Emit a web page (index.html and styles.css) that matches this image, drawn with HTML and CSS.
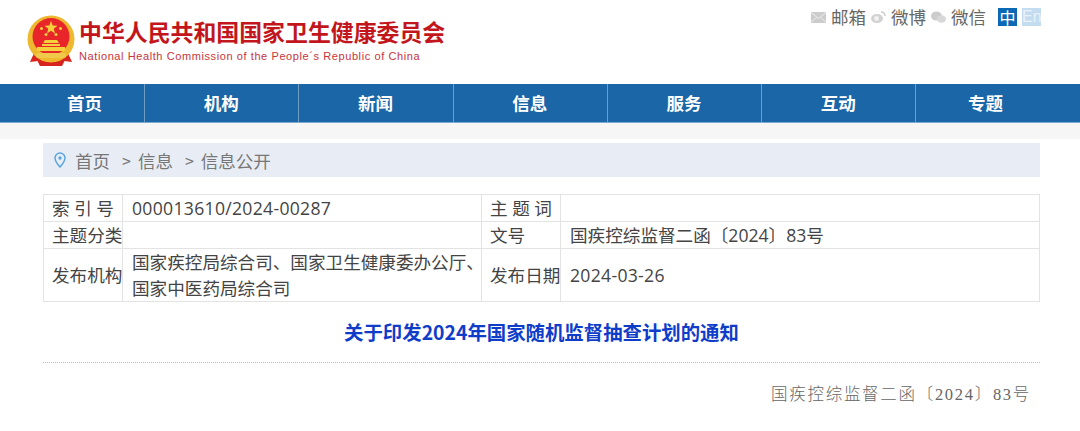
FILE: index.html
```html
<!DOCTYPE html>
<html lang="zh">
<head>
<meta charset="utf-8">
<title>关于印发2024年国家随机监督抽查计划的通知</title>
<link rel="stylesheet" href="styles.css">
</head>
<body>
<header class="top">
  <div class="brand">
    <svg class="emblem" width="48" height="52" viewBox="0 0 48 52">
      <path d="M8 36 L3 47 L11 46 L14 51 L34 51 L37 46 L45 47 L40 36 Z" fill="#d8241f"/>
      <circle cx="24" cy="24" r="23.500" fill="#eeb92f"/>
      <circle cx="24" cy="21.500" r="18.500" fill="#e8262a"/>
      <path d="M24 6l1.700 4.600 4.800.1-3.800 3 1.400 4.700-4.100-2.700-4.100 2.700 1.400-4.700-3.800-3 4.800-.1z" fill="#f6cf3c"/>
      <circle cx="14.500" cy="13.500" r="1.500" fill="#f6cf3c"/><circle cx="33.500" cy="13.500" r="1.500" fill="#f6cf3c"/>
      <circle cx="19" cy="19.500" r="1.500" fill="#f6cf3c"/><circle cx="29" cy="19.500" r="1.500" fill="#f6cf3c"/>
      <path d="M18 25h12l1.500 2v1h-15v-1z M15 29h18v2H15z M10 32h28v4H10z" fill="#f6cf3c"/>
      <rect x="9" y="38" width="30" height="5" rx="2.500" fill="#f1c94a"/>
      <path d="M10 45q14 6 28 0l-3 6H13z" fill="#d8241f"/>
    </svg>
    <div class="brand-text">
      <div class="brand-cn">中华人民共和国国家卫生健康委员会</div>
      <div class="brand-en">National Health Commission of the People´s Republic of China</div>
    </div>
  </div>
  <div class="tools">
    <svg class="tool-icon" width="15" height="11" viewBox="0 0 15 11"><rect width="15" height="11" fill="#ccc"/><path d="M0 .5l7.500 6 7.500-6M0 10.500l5-5M15 10.500l-5-5" fill="none" stroke="#eee" stroke-width="1"/></svg>
    <span class="tool-text">邮箱</span>
    <svg class="tool-icon" width="15" height="12" viewBox="0 0 15 12"><ellipse cx="6" cy="7.500" rx="6" ry="4.500" fill="#d2d2d2"/><circle cx="5.500" cy="7.500" r="2.400" fill="#f2f2f2"/><path d="M10 1q4 0 4 4" fill="none" stroke="#ccc" stroke-width="1.500"/></svg>
    <span class="tool-text">微博</span>
    <svg class="tool-icon" width="15" height="12" viewBox="0 0 15 12"><ellipse cx="5.500" cy="5" rx="5.500" ry="4.500" fill="#ccc"/><ellipse cx="10.500" cy="8" rx="4.500" ry="3.800" fill="#d8d8d8"/></svg>
    <span class="tool-text">微信</span>
    <span class="lang lang-cn">中</span>
    <span class="lang lang-en">En</span>
  </div>
</header>

<nav class="nav">
  <a class="nav-item nav-first">首页</a>
  <a class="nav-item">机构</a>
  <a class="nav-item">新闻</a>
  <a class="nav-item">信息</a>
  <a class="nav-item">服务</a>
  <a class="nav-item">互动</a>
  <a class="nav-item nav-last">专题</a>
</nav>
<div class="strip"></div>

<main class="main">
  <div class="crumbs">
    <svg class="pin" width="12" height="16" viewBox="0 0 12 16"><path d="M6 1a5 5 0 0 0-5 5c0 3.500 5 9 5 9s5-5.500 5-9a5 5 0 0 0-5-5z" fill="none" stroke="#5aa5de" stroke-width="1.500"/><circle cx="6" cy="6" r="1.700" fill="#5aa5de"/></svg>
    <span>首页</span><span class="sep">&gt;</span><span>信息</span><span class="sep">&gt;</span><span>信息公开</span>
  </div>

  <table class="meta">
    <colgroup><col class="c1"><col class="c2"><col class="c3"><col class="c4"></colgroup>
    <tr class="r1"><th>索 引 号</th><td class="num">000013610/2024-00287</td><th>主 题 词</th><td></td></tr>
    <tr class="r2"><th>主题分类</th><td></td><th>文号</th><td>国疾控综监督二函〔2024〕83号</td></tr>
    <tr class="r3"><th>发布机构</th><td>国家疾控局综合司、国家卫生健康委办公厅、<br>国家中医药局综合司</td><th>发布日期</th><td class="num">2024-03-26</td></tr>
  </table>

  <h1 class="title">关于印发2024年国家随机监督抽查计划的通知</h1>
  <p class="docno">国疾控综监督二函〔2024〕83号</p>
</main>
</body>
</html>
```
FILE: styles.css
```css
* { box-sizing: border-box; }
html, body { margin: 0; padding: 0; }
body {
  width: 1080px;
  height: 431px;
  overflow: hidden;
  background: #fff;
  font-family: "Noto Sans CJK SC", "Noto Sans", sans-serif;
  color: #555;
}
.top {
  height: 84px;
  display: flex;
  justify-content: space-between;
  align-items: flex-start;
  padding: 0 39px 0 27px;
}
.brand { display: flex; align-items: flex-start; padding-top: 15px; gap: 4px; }
.emblem { display: block; }
.brand-text { padding-top: 1px; }
.brand-cn {
  font-size: 22.900px;
  line-height: 30px;
  font-weight: 700;
  color: #c2161c;
  white-space: nowrap;
}
.brand-en {
  font-family: "Liberation Sans", sans-serif;
  font-size: 11px;
  line-height: 14px;
  margin-top: 3px;
  color: #c8343a;
  letter-spacing: 0.590px;
  white-space: nowrap;
}
.tools {
  display: flex;
  align-items: center;
  height: 18px;
  margin-top: 8px;
  font-size: 17.500px;
  color: #666;
}
.tool-icon { display: block; margin-right: 5px; }
.tool-text { margin-right: 5px; line-height: 18px; }
.tool-text:nth-of-type(3) { margin-right: 12px; }
.lang {
  display: block;
  width: 19px;
  height: 18px;
  line-height: 18px;
  text-align: center;
  font-size: 16px;
  color: #fff;
}
.lang-cn { background: #0b68b4; }
.lang-en { background: #c3dcef; color: #e8f2fa; margin-left: 5px; font-family: "Liberation Sans", sans-serif; }

.nav {
  height: 39px;
  background: #1a66a6;
  border-bottom: 1px solid #7fa9cc;
  display: flex;
  padding-left: 24px;
}
.nav-item {
  width: 154.300px;
  height: 38px;
  padding-right: 1px;
  line-height: 37px;
  text-align: center;
  font-size: 17.500px;
  font-weight: 700;
  color: #fff;
  border-left: 1px solid #6f9dc4;
}
.nav-first { width: 120px; border-left: 0; padding: 0 0 0 1px; }
.nav-last { width: 140px; }
.strip { height: 16px; background: #f6f6f6; }

.main { padding: 4px 40px 0 43px; }
.crumbs {
  height: 34px;
  background: #e8edf5;
  display: flex;
  align-items: center;
  padding-left: 11px;
  font-size: 17.500px;
  color: #777;
}
.pin { margin-right: 9px; display: block; }
.sep { margin: 0 7px 0 12px; font-size: 16px; }

.meta {
  width: 997px;
  margin-top: 17px;
  border-collapse: collapse;
  table-layout: fixed;
  font-family: "Open Sans", "Noto Sans CJK SC", sans-serif;
  font-size: 17.600px;
  color: #444;
}
.c1 { width: 79px; }
.c2 { width: 359px; }
.c3 { width: 79px; }
.meta th, .meta td {
  border: 1px solid #e3e3e3;
  font-weight: 400;
  text-align: left;
  line-height: 26px;
  white-space: nowrap;
}
.meta th { padding: 0 0 0 8px; }
.meta td { padding: 0 0 0 9px; }
.meta .num { letter-spacing: 0.300px; }
.r1 th, .r1 td, .r2 th, .r2 td { height: 27px; }
.r3 th, .r3 td { height: 53px; }

.title {
  margin: 0;
  padding: 17px 0 0;
  height: 61px;
  border-bottom: 1px dotted #bbb;
  text-align: center;
  font-size: 19.400px;
  line-height: 26px;
  font-weight: 700;
  color: #0f3dc9;
}
.docno {
  margin: 0;
  padding: 20px 9px 0 0;
  text-align: right;
  font-family: "Liberation Serif", "Noto Sans CJK SC", serif;
  font-size: 16.500px;
  line-height: 24px;
  letter-spacing: 1.700px;
  font-weight: 300;
  color: #666;
}
```
